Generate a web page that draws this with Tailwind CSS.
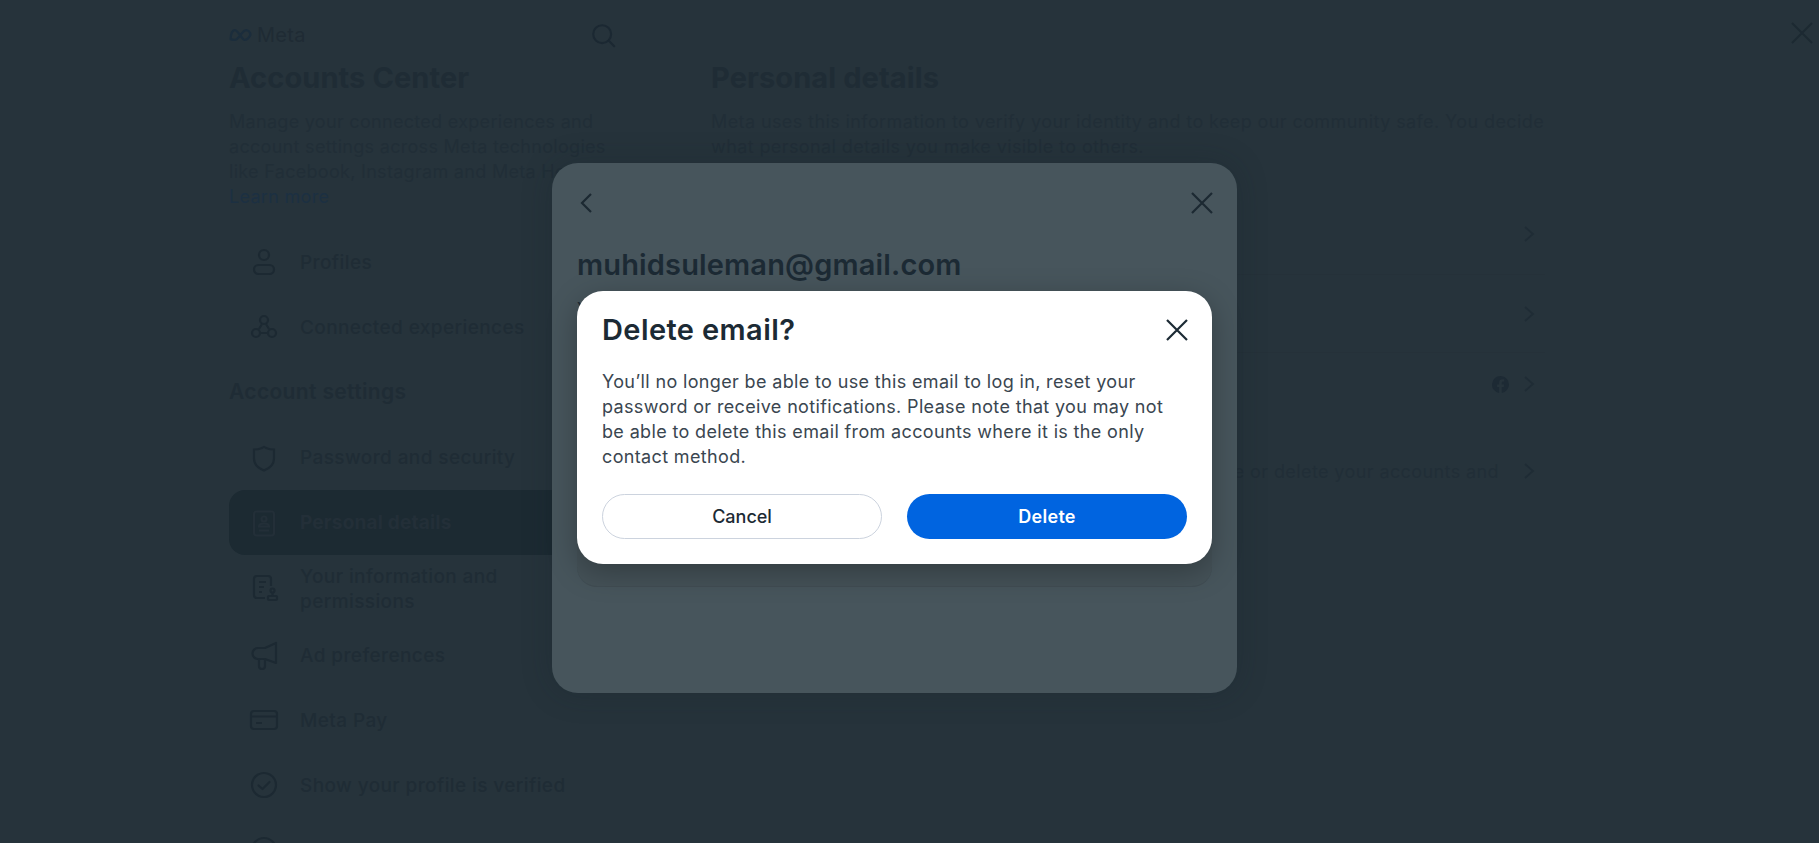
<!DOCTYPE html>
<html lang="en">
<head>
    <meta charset="UTF-8">
    <meta name="viewport" content="width=device-width, initial-scale=1.0">
    <title>Accounts Center - Delete email</title>
    <script src="https://cdn.jsdelivr.net/npm/@tailwindcss/browser@4"></script>
</head>
<body class="relative w-[1819px] h-[843px] overflow-hidden bg-[#26333b] font-['Inter','Noto_Sans',sans-serif] text-[#1f2c35]">
    <!-- page behind the modal -->
    <div class="flex h-full pl-[229px]">
        <aside class="w-[482px] shrink-0 pt-[22px]">
            <div class="flex w-[387px] items-center justify-between h-[26px]">
                <div class="flex items-center gap-[5px]">
                    <svg width="23" height="14" viewBox="0 0 28 16" fill="none" stroke="#1b2d3c" stroke-width="2.8"><path d="M2 13c0-6 2-11 5-11 4 0 9 12 12 12 3 0 5-2 7-6 0-4-3-6-5-6-5 0-9 12-14 12-3 0-5-1-5-1z"/></svg>
                    <span class="text-[20px] leading-none tracking-[0.3px] text-[#1f2b34]">Meta</span>
                </div>
                <svg width="25" height="25" viewBox="0 0 28 28" fill="none" stroke="#1b2832" stroke-width="2.4" stroke-linecap="round"><circle cx="12.5" cy="12.5" r="10"/><path d="M20 20l6 6"/></svg>
            </div>
            <h1 class="mt-[15px] text-[29px] leading-[30px] font-bold tracking-[0.1px]">Accounts Center</h1>
            <p class="mt-[16px] w-[392px] text-[18px] leading-[25px] tracking-[0.3px] text-[#212e37] whitespace-nowrap">Manage your connected experiences and<br>account settings across Meta technologies<br>like Facebook, Instagram and Meta Horizon.<span class="block text-[#1c3042]">Learn more</span></p>

            <nav class="mt-[20px] w-[420px] flex flex-col">
                <a class="flex items-center h-[65px] pl-[20px] gap-[21px] text-[19px] tracking-[0.4px] font-medium">
                    <svg class="w-[30px] h-[30px] shrink-0" viewBox="0 0 30 30" fill="none" stroke="#1c2932" stroke-width="2.2"><circle cx="15" cy="8" r="5"/><rect x="5" y="18" width="20" height="9" rx="4.5"/></svg>
                    <span class="pt-[3px]">Profiles</span>
                </a>
                <a class="flex items-center h-[65px] pl-[20px] gap-[21px] text-[19px] tracking-[0.4px] font-medium">
                    <svg class="w-[30px] h-[30px] shrink-0" viewBox="0 0 30 30" fill="none" stroke="#1c2932" stroke-width="2.2"><circle cx="15" cy="8" r="4"/><circle cx="7" cy="21" r="4"/><circle cx="23" cy="21" r="4"/><path d="M13 12l-3 5M17 12l3 5M11 21h8"/></svg>
                    <span class="pt-[3px]">Connected experiences</span>
                </a>
                <h2 class="mt-[20px] mb-[20px] text-[21px] leading-[26px] tracking-[0.35px] font-semibold">Account settings</h2>
                <a class="flex items-center h-[65px] pl-[20px] gap-[21px] text-[19px] tracking-[0.4px] font-medium">
                    <svg class="w-[30px] h-[30px] shrink-0" viewBox="0 0 30 30" fill="none" stroke="#1c2932" stroke-width="2.2"><path d="M5 6.5c6 0 7-1.500 10-2.500 3 1 4 2.500 10 2.500v9c0 6-5 10-10 12-5-2-10-6-10-12z"/></svg>
                    <span class="pt-[2px]">Password and security</span>
                </a>
                <a class="flex items-center h-[65px] pl-[20px] gap-[21px] text-[19px] tracking-[0.2px] font-bold rounded-[16px] bg-[#1c2a32] text-[#232f38] w-[440px]">
                    <svg class="w-[30px] h-[30px] shrink-0" viewBox="0 0 30 30" fill="none" stroke="#232f38" stroke-width="2.2"><rect x="5" y="3.500" width="20" height="24" rx="2.500"/><circle cx="15" cy="11" r="2.500"/><path d="M10 18.500c0-2 2-3 5-3s5 1 5 3zM10 22.500h10"/></svg>
                    <span class="pt-[2px]">Personal details</span>
                </a>
                <a class="flex items-center h-[65px] pl-[20px] gap-[21px] text-[19px] tracking-[0.4px] leading-[25px] font-medium">
                    <svg class="w-[30px] h-[30px] shrink-0" viewBox="0 0 30 30" fill="none" stroke="#1c2932" stroke-width="2.2"><path d="M16 25H8a3 3 0 0 1-3-3V6a3 3 0 0 1 3-3h11a3 3 0 0 1 3 3v7"/><path d="M10 9h7M10 14h5M10 19h3"/><rect x="19" y="23" width="9" height="4" rx="1"/><circle cx="23.500" cy="17.500" r="2"/><path d="M23.500 19v4"/></svg>
                    <span class="w-[240px] pt-[2px]">Your information and permissions</span>
                </a>
                <a class="flex items-center h-[65px] mt-[2px] pl-[20px] gap-[21px] text-[19px] tracking-[0.4px] font-medium">
                    <svg class="w-[30px] h-[30px] shrink-0" viewBox="0 0 30 30" fill="none" stroke="#1c2932" stroke-width="2.2" stroke-linejoin="round"><path d="M27 3v20l-11-4H9a5 5 0 0 1 0-11h7z"/><path d="M10 19v7a2.500 2.500 0 0 0 6 0v-7"/></svg>
                    <span class="pt-[3px]">Ad preferences</span>
                </a>
                <a class="flex items-center h-[65px] pl-[20px] gap-[21px] text-[19px] tracking-[0.4px] font-medium">
                    <svg class="w-[30px] h-[30px] shrink-0" viewBox="0 0 30 30" fill="none" stroke="#1c2932" stroke-width="2.2"><rect x="2" y="6" width="26" height="18" rx="3"/><path d="M2 11.500h26M7 18h6"/></svg>
                    <span class="pt-[3px]">Meta Pay</span>
                </a>
                <a class="flex items-center h-[65px] pl-[20px] gap-[21px] text-[19px] tracking-[0.4px] font-medium">
                    <svg class="w-[30px] h-[30px] shrink-0" viewBox="0 0 30 30" fill="none" stroke="#1c2932" stroke-width="2.2" stroke-linecap="round" stroke-linejoin="round"><circle cx="15" cy="15" r="12" stroke-dasharray="5.500 0.800"/><path d="M9.500 15.500l4 3.500 7-7"/></svg>
                    <span class="pt-[3px]">Show your profile is verified</span>
                </a>
                <a class="flex items-center h-[65px] pl-[20px] gap-[21px] text-[19px] font-medium">
                    <svg class="w-[30px] h-[30px] shrink-0" viewBox="0 0 30 30" fill="none" stroke="#1c2932" stroke-width="2.2"><circle cx="15" cy="15" r="12"/></svg>
                </a>
            </nav>
        </aside>

        <main class="w-[834px] shrink-0 pt-[63px]">
            <h2 class="text-[29px] leading-[30px] font-bold tracking-[0.1px]">Personal details</h2>
            <p class="mt-[16px] whitespace-nowrap text-[18px] leading-[25px] tracking-[0.4px] text-[#212e37]">Meta uses this information to verify your identity and to keep our community safe. You decide<br>what personal details you make visible to others.</p>
            <div class="mt-[34px] flex flex-col">
                <div class="flex items-center justify-end h-[82px] border-b border-[#253139] pr-[8px]">
                    <svg width="16" height="20" viewBox="0 0 16 20" fill="none" stroke="#1f2c35" stroke-width="1.800"><path d="M4 3l8 7-8 7"/></svg>
                </div>
                <div class="flex items-center justify-end h-[78px] border-b border-[#253139] pr-[8px]">
                    <svg width="16" height="20" viewBox="0 0 16 20" fill="none" stroke="#1f2c35" stroke-width="1.800"><path d="M4 3l8 7-8 7"/></svg>
                </div>
                <div class="flex items-center justify-end gap-[12px] h-[62px] pr-[8px]">
                    <svg width="17" height="17" viewBox="0 0 24 24" fill="#1d2a34"><path d="M24 12a12 12 0 1 0-13.900 11.900v-8.400H7.100V12h3V9.400c0-3 1.800-4.700 4.500-4.700 1.300 0 2.700.2 2.700.2v3h-1.500c-1.500 0-2 .9-2 1.900V12h3.300l-.5 3.500h-2.800v8.400A12 12 0 0 0 24 12z"/></svg>
                    <svg width="16" height="20" viewBox="0 0 16 20" fill="none" stroke="#1f2c35" stroke-width="1.800"><path d="M4 3l8 7-8 7"/></svg>
                </div>
                <div class="flex items-center justify-end gap-[22px] h-[112px] pr-[8px]">
                    <span class="text-[18px] tracking-[0.4px] whitespace-nowrap text-[#212e37]">Manage your data, modify your legacy contact, deactivate or delete your accounts and</span>
                    <svg width="16" height="20" viewBox="0 0 16 20" fill="none" stroke="#1f2c35" stroke-width="1.800"><path d="M4 3l8 7-8 7"/></svg>
                </div>
            </div>
        </main>
    </div>

    <svg class="absolute left-[1790px] top-[21px]" width="24" height="24" viewBox="0 0 24 24" fill="none" stroke="#1c2932" stroke-width="2"><path d="M2 2l20 20M22 2L2 22"/></svg>

    <!-- email panel -->
    <div class="absolute left-[552px] top-[163px] w-[685px] h-[530px] rounded-[26px] bg-[#47555c] shadow-[0_0_30px_rgba(20,30,38,0.25)]">
        <div class="flex items-center justify-between px-[25px] pt-[28px]">
            <svg class="-ml-[1px]" width="24" height="24" viewBox="0 0 24 24" fill="none" stroke="#1c2932" stroke-width="2.200"><path d="M15 3l-9 9 9 9"/></svg>
            <svg class="mr-[-2px]" width="24" height="24" viewBox="0 0 24 24" fill="none" stroke="#1c2932" stroke-width="2.200"><path d="M2 2l20 20M22 2L2 22"/></svg>
        </div>
        <h3 class="mt-[32px] px-[25px] text-[29px] leading-[36px] tracking-[0.15px] font-semibold text-[#1c2a34]">muhidsuleman@gmail.com</h3>
        <p class="mt-[14px] px-[25px] text-[18px] leading-[25px]">You</p>
        <div class="absolute left-[25px] top-[300px] w-[635px] h-[124px] rounded-[20px] bg-[#455258] border-b border-[#414d53]"></div>

        <!-- delete confirmation -->
        <div class="absolute left-[25px] top-[128px] w-[635px] h-[273px] rounded-[26px] bg-white shadow-[0_8px_30px_rgba(0,0,0,0.28)] px-[25px] pt-[21px]">
            <div class="flex items-center justify-between h-[36px]">
                <h4 class="text-[29px] leading-[36px] tracking-[0.4px] font-semibold text-[#1c2a34]">Delete email?</h4>
                <svg class="mr-[-2px]" width="24" height="24" viewBox="0 0 24 24" fill="none" stroke="#1c2a34" stroke-width="2.200"><path d="M2 2l20 20M22 2L2 22"/></svg>
            </div>
            <p class="mt-[21px] w-[575px] text-[18px] leading-[25px] tracking-[0.35px] text-[#3a4650]">You’ll no longer be able to use this email to log in, reset your password or receive notifications. Please note that you may not be able to delete this email from accounts where it is the only contact method.</p>
            <div class="mt-[25px] flex gap-[25px]">
                <button class="w-[280px] h-[45px] rounded-full border border-[#ccd3de] bg-white text-[18px] font-medium text-[#1c2a34]">Cancel</button>
                <button class="w-[280px] h-[45px] rounded-full bg-[#0064e0] text-[18px] tracking-[0.3px] font-semibold text-white">Delete</button>
            </div>
        </div>
    </div>
</body>
</html>
